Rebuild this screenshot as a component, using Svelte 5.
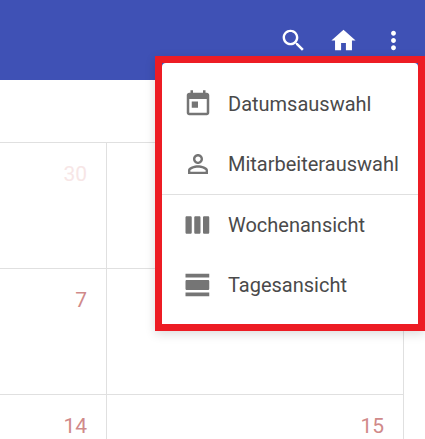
<script lang="ts">
    const weeks = [
        [{ day: 30, faded: true }, {}],
        [{ day: 7 }, {}],
        [{ day: 14 }, { day: 15 }]
    ]

    const menuItems = [
        {
            label: 'Datumsauswahl',
            d: 'M19 3h-1V1h-2v2H8V1H6v2H5c-1.11 0-1.99.9-1.99 2L3 19c0 1.1.89 2 2 2h14c1.1 0 2-.9 2-2V5c0-1.1-.9-2-2-2zm0 16H5V8h14v11zM7 10h5v5H7z'
        },
        {
            label: 'Mitarbeiterauswahl',
            d: 'M12 5.9c1.16 0 2.1.94 2.1 2.1s-.94 2.1-2.1 2.1S9.9 9.16 9.9 8s.94-2.1 2.1-2.1m0 9c2.97 0 6.1 1.46 6.1 2.1v1.1H5.9V17c0-.64 3.13-2.1 6.1-2.1M12 4C9.79 4 8 5.79 8 8s1.79 4 4 4 4-1.79 4-4-1.79-4-4-4zm0 9c-2.67 0-8 1.34-8 4v3h16v-3c0-2.66-5.33-4-8-4z',
            divider: true
        },
        {
            label: 'Wochenansicht',
            d: 'M6 5H3c-.55 0-1 .45-1 1v12c0 .55.45 1 1 1h3c.55 0 1-.45 1-1V6c0-.55-.45-1-1-1zm14 0h-3c-.55 0-1 .45-1 1v12c0 .55.45 1 1 1h3c.55 0 1-.45 1-1V6c0-.55-.45-1-1-1zm-7 0h-3c-.55 0-1 .45-1 1v12c0 .55.45 1 1 1h3c.55 0 1-.45 1-1V6c0-.55-.45-1-1-1z'
        },
        {
            label: 'Tagesansicht',
            d: 'M2 21h19v-3H2v3zM20 8H3c-.55 0-1 .45-1 1v6c0 .55.45 1 1 1h17c.55 0 1-.45 1-1V9c0-.55-.45-1-1-1zM2 3v3h19V3H2z'
        }
    ]

    const headerIcons = [
        'M15.5 14h-.79l-.28-.27C15.41 12.59 16 11.11 16 9.5 16 5.91 13.09 3 9.5 3S3 5.91 3 9.5 5.91 16 9.5 16c1.61 0 3.09-.59 4.23-1.57l.27.28v.79l5 4.99L20.49 19l-4.99-5zm-6 0C7.01 14 5 11.99 5 9.5S7.01 5 9.5 5 14 7.01 14 9.5 11.99 14 9.5 14z',
        'M10 20v-6h4v6h5v-8h3L12 3 2 12h3v8z',
        'M12 8c1.1 0 2-.9 2-2s-.9-2-2-2-2 .9-2 2 .9 2 2 2zm0 2c-1.1 0-2 .9-2 2s.9 2 2 2 2-.9 2-2-.9-2-2-2zm0 6c-1.1 0-2 .9-2 2s.9 2 2 2 2-.9 2-2-.9-2-2-2z'
    ]
</script>

<div class="page">
    <header class="toolbar">
        {#each headerIcons as d}
            <svg class="toolbar-icon" viewBox="0 0 24 24"><path {d} /></svg>
        {/each}
    </header>

    <main class="calendar">
        {#each weeks as week}
            <div class="week">
                {#each week as cell}
                    <div class="cell" class:faded={cell.faded}>{cell.day ?? ''}</div>
                {/each}
            </div>
        {/each}
    </main>

    <div class="highlight">
        <nav class="menu">
            {#each menuItems as item}
                <div class="item">
                    <svg class="item-icon" viewBox="0 0 24 24"><path d={item.d} /></svg>
                    <span>{item.label}</span>
                </div>
                {#if item.divider}
                    <div class="divider"></div>
                {/if}
            {/each}
        </nav>
    </div>
</div>

<style>
    :global(body) {
        background: #fff;
        overflow: hidden;
    }

    .page {
        position: relative;
        height: 439px;
        overflow: hidden;
        font-family: Roboto, sans-serif;
    }

    .toolbar {
        display: flex;
        align-items: center;
        justify-content: flex-end;
        gap: 21px;
        height: 80px;
        padding-right: 17px;
        box-sizing: border-box;
        background-color: #3f51b5;
    }

    .toolbar-icon {
        width: 29px;
        height: 29px;
        fill: #fff;
    }

    .calendar {
        width: 404px;
        margin-top: 62px;
    }

    .week {
        display: grid;
        grid-template-columns: 107px 297px;
        height: 126px;
        box-sizing: border-box;
        border-top: 1px solid #e0e0e0;
    }

    .cell {
        padding: 19px 19px 0 0;
        border-right: 1px solid #e0e0e0;
        font-size: 21px;
        line-height: 25px;
        text-align: right;
        color: #d08a8a;
    }

    .cell.faded {
        color: #f7e6e6;
    }

    .highlight {
        position: absolute;
        top: 56px;
        left: 155px;
        width: 270px;
        height: 275px;
        box-sizing: border-box;
        border: 7px solid #ed1c24;
        box-shadow: 0 3px 10px rgba(0, 0, 0, 0.14);
    }

    .menu {
        height: 100%;
        padding: 11px 0 9px;
        box-sizing: border-box;
        border-radius: 4px;
        background: #fff;
    }

    .item {
        display: flex;
        align-items: center;
        height: 60px;
        padding-left: 21px;
        font-size: 20px;
        color: #4a4a4a;
    }

    .item-icon {
        width: 30px;
        height: 30px;
        margin-right: 15px;
        fill: #757575;
    }

    .divider {
        height: 1px;
        background: #e0e0e0;
    }
</style>
